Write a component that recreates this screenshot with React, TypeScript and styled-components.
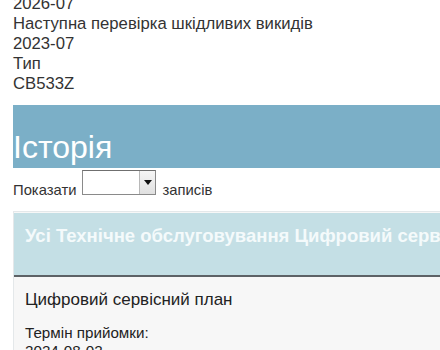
import React from 'react';
import styled, { createGlobalStyle } from 'styled-components';

const GlobalStyle = createGlobalStyle`
  html, body {
    margin: 0;
    padding: 0;
    background: #ffffff;
  }
  body {
    font-family: "Liberation Sans", Arial, sans-serif;
    overflow: hidden;
  }
`;

const specList = [
  '2026-07',
  'Наступна перевірка шкідливих викидів',
  '2023-07',
  'Тип',
  'CB533Z',
];

const Page = styled.div`
  width: 440px;
  height: 350px;
  overflow: hidden;
  padding-left: 13px;
  box-sizing: border-box;
`;

const Scroller = styled.div`
  margin-top: -6px;
`;

const SpecList = styled.div`
  display: flex;
  flex-direction: column;
  font-size: 16.7px;
  line-height: 20px;
  color: #333333;
  margin-bottom: 11px;
`;

const SectionTitle = styled.div`
  width: 440px;
  height: 63px;
  background-color: #7bafc7;
  color: #ffffff;
  font-size: 32px;
  line-height: 32px;
  display: flex;
  align-items: flex-end;
  padding-bottom: 5px;
  box-sizing: border-box;
`;

const LengthRow = styled.div`
  display: flex;
  align-items: baseline;
  gap: 6px;
  margin-top: 2px;
  font-size: 14.8px;
  line-height: 16px;
  color: #333333;
  height: 25px;
`;

const Select = styled.div`
  width: 74px;
  height: 25px;
  box-sizing: border-box;
  border: 1px solid #8a8a8a;
  border-top-color: #6f6f6f;
  background: #ffffff;
  display: flex;
  justify-content: flex-end;
  align-self: flex-start;
`;

const SelectArrow = styled.div`
  width: 16px;
  height: 100%;
  box-sizing: border-box;
  border-left: 1px solid #b8b8b8;
  background: linear-gradient(#f6f6f6, #e0e0e0);
  display: flex;
  align-items: center;
  justify-content: center;
  &::after {
    content: '';
    border-left: 4px solid transparent;
    border-right: 4px solid transparent;
    border-top: 5px solid #111111;
  }
`;

const RowLabel = styled.span`
  align-self: flex-end;
  margin-bottom: -3px;
`;

const Card = styled.div`
  margin-top: 16px;
  width: 440px;
  border: 1px solid #e4e8ea;
  border-right: none;
  padding-top: 1px;
  background: #f7f7f7;
`;

const CardHeader = styled.div`
  height: 64px;
  box-sizing: border-box;
  background-color: #c4dfe5;
  border-bottom: 2px solid #5d6266;
  padding: 12px 0 0 11px;
  font-size: 18.5px;
  font-weight: bold;
  color: #f4fafb;
  white-space: nowrap;
  overflow: hidden;
`;

const CardBody = styled.div`
  padding: 13px 11px 0;
  color: #222222;
`;

const PlanName = styled.div`
  font-size: 17px;
  line-height: 20px;
  margin-bottom: 14px;
`;

const Field = styled.div`
  display: flex;
  flex-direction: column;
  font-size: 15.2px;
  line-height: 18px;
`;

const App = () => {
  return (
    <Page>
      <GlobalStyle />
      <Scroller>
        <SpecList>
          {specList.map((line, i) => (
            <span key={`spec-${i}`}>{line}</span>
          ))}
        </SpecList>
        <SectionTitle>Історія</SectionTitle>
        <LengthRow>
          <RowLabel>Показати</RowLabel>
          <Select>
            <SelectArrow />
          </Select>
          <RowLabel>записів</RowLabel>
        </LengthRow>
        <Card>
          <CardHeader>Усі Технічне обслуговування Цифровий сервісний план</CardHeader>
          <CardBody>
            <PlanName>Цифровий сервісний план</PlanName>
            <Field>
              <span>Термін прийомки:</span>
              <span>2024-08-02</span>
            </Field>
          </CardBody>
        </Card>
      </Scroller>
    </Page>
  );
};

export default App;
